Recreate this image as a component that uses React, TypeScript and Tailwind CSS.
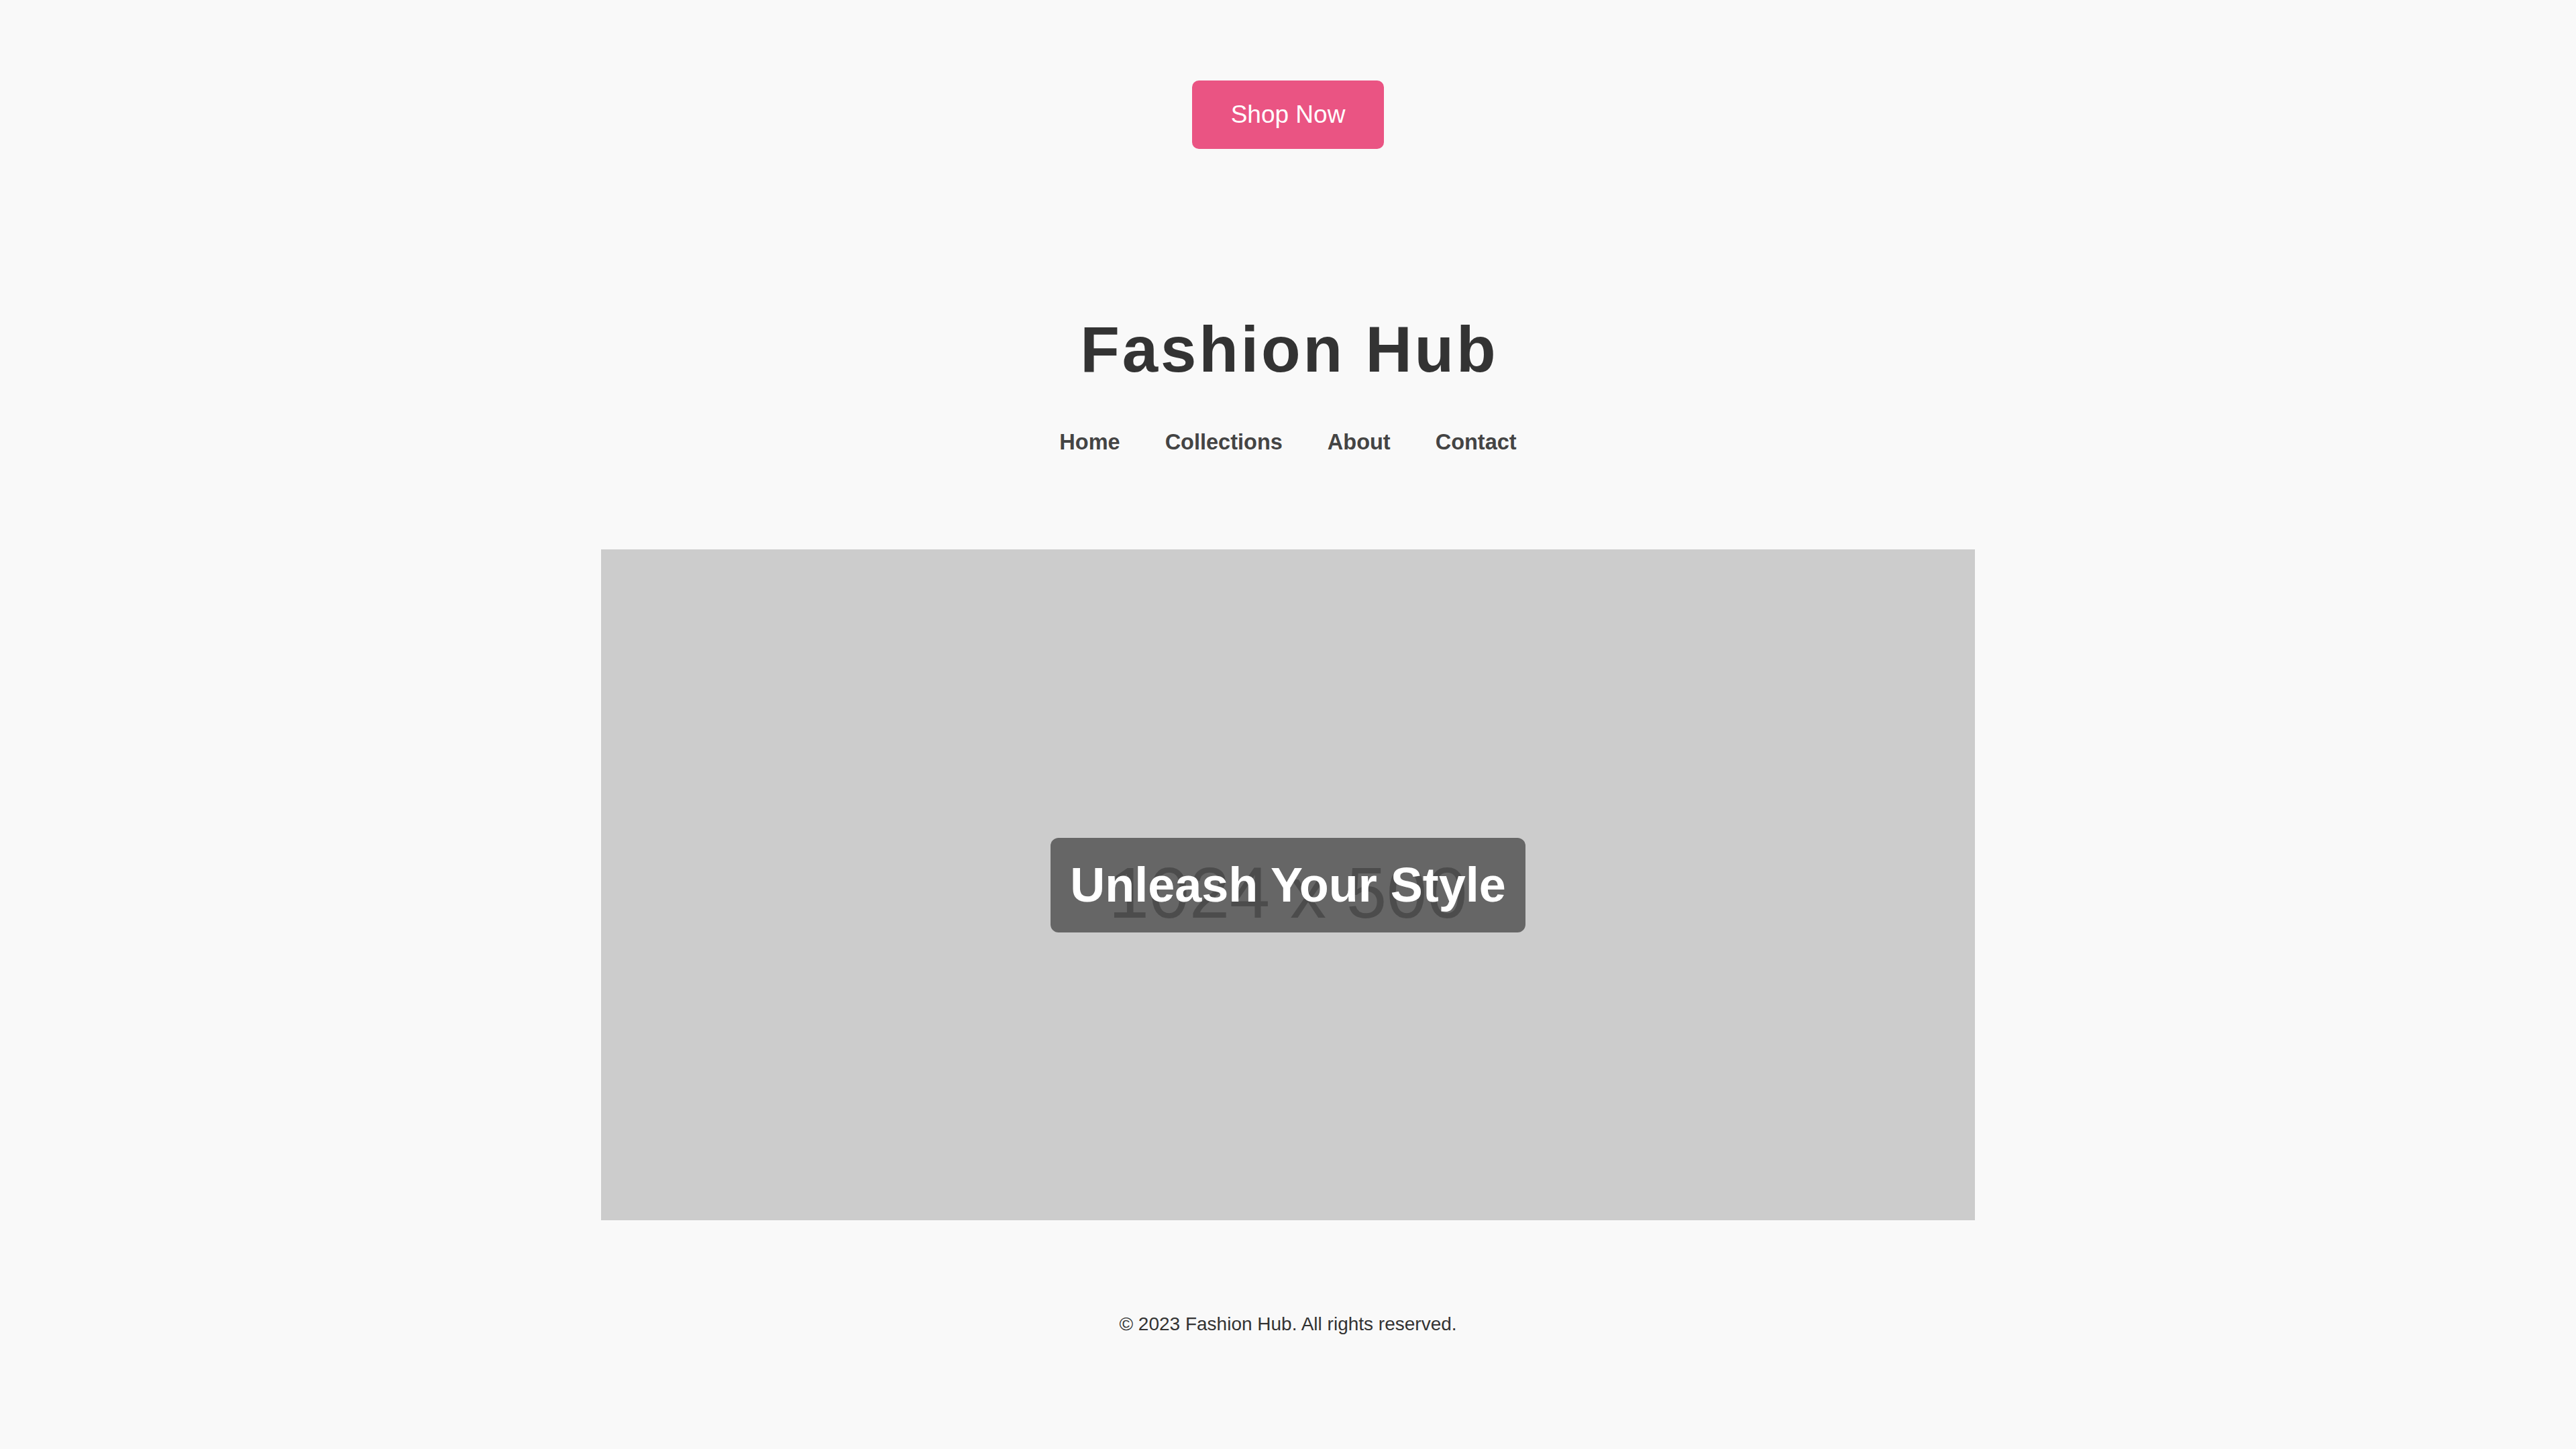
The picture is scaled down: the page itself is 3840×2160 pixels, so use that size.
const navLinks = ['Home', 'Collections', 'About', 'Contact']

function Hero() {
  return (
    <div className="relative mt-[141px] w-[2048px] h-[1000px] bg-[#cccccc] flex items-center justify-center">
      {/* stand-in for the 1024x500 placeholder picture */}
      <span className="pt-[24px] text-[108px] leading-[120px] text-[#999999]">1024 x 500</span>
      <div className="absolute inset-0 flex items-center justify-center">
        <h2 className="px-[29px] py-[29px] rounded-[12px] bg-black/50 text-white text-[72px] leading-[83px] font-bold">
          Unleash Your Style
        </h2>
      </div>
    </div>
  )
}

export default function App() {
  return (
    <div className="min-h-screen bg-[#f9f9f9] flex flex-col items-center font-['Liberation_Sans',Arial,sans-serif] pt-[120px]">
      <button className="px-[58px] py-[29px] rounded-[10px] bg-[#ea5483] text-white text-[37px] leading-[44px]">
        Shop Now
      </button>

      <h1 className="mt-[244px] pl-[3.8px] text-[96px] leading-[110px] font-bold tracking-[3.8px] text-[#333333]">
        Fashion Hub
      </h1>

      <nav className="mt-[64px] flex gap-[67px]">
        {navLinks.map(link => (
          <a key={link} href="#" className="text-[32.5px] leading-[38px] font-bold text-[#444444]">
            {link}
          </a>
        ))}
      </nav>

      <Hero />

      <footer className="mt-[139px] pb-[170px]">
        <p className="text-[28px] leading-[32px] text-[#333333]">© 2023 Fashion Hub. All rights reserved.</p>
      </footer>
    </div>
  )
}
